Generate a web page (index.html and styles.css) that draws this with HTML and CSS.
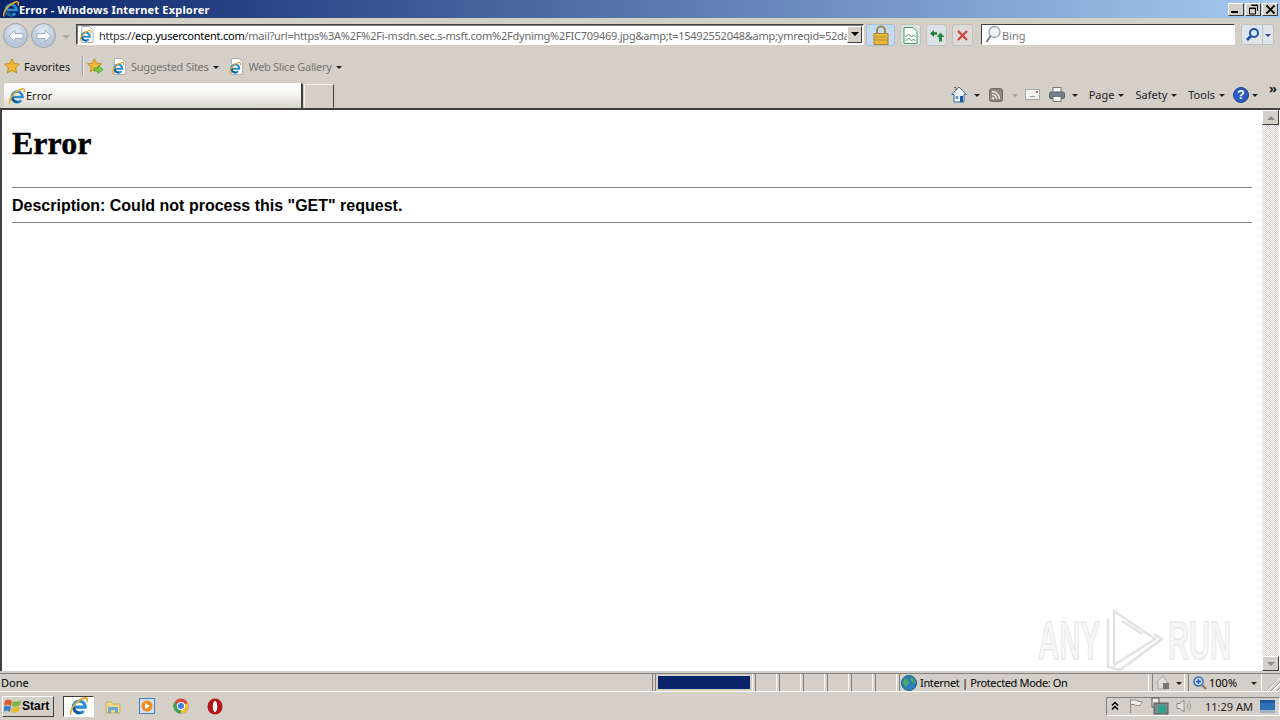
FILE: index.html
```html
<!doctype html>
<html>
  <head>
    <meta charset="UTF-8" />
    <title>Error - Windows Internet Explorer</title>
    <link rel="stylesheet" href="styles.css">
  </head>
  <body>
    <svg class="defs" width="0" height="0">
      <symbol id="ie" viewBox="0 0 16 16">
        <path d="M4 9h9.500a5.300 5.300 0 1 0-1.300 3.400" fill="none" stroke="#2b8ed0" stroke-width="2.700" />
        <path d="M3.300 9a5.300 5.300 0 0 0 6.200 4.900" fill="none" stroke="#14578f" stroke-width="2.200" />
        <path d="M.8 15.500C-.5 11 6 3 12.500 1c2.700-.8 3.500 1 2.500 3.500" fill="none" stroke="#e6a82c" stroke-width="1.500" />
      </symbol>
      <symbol id="page" viewBox="0 0 16 18">
        <path d="M2.500 .5h8l4 4v13h-12z" fill="#fff" stroke="#a9a9a9" />
        <use href="#ie" x="0" y="4" width="13" height="13" />
      </symbol>
      <symbol id="star" viewBox="0 0 16 16">
        <path d="M8 .8l2.200 4.800 5.200.6-3.900 3.500 1.100 5.200L8 12.300l-4.600 2.600 1.100-5.200L.6 6.200l5.200-.6z" fill="#f5b93a" stroke="#c98a1c" />
      </symbol>
    </svg>

    <header class="titlebar">
      <svg class="title-icon"><use href="#ie" /></svg>
      <span class="title-text">Error - Windows Internet Explorer</span>
      <div class="win-buttons">
        <div class="win-btn"><span class="glyph-min"></span></div>
        <div class="win-btn">
          <svg width="11" height="11" viewBox="0 0 11 11"><path d="M3.500 1h6v6M1.500 4h6v6h-6zM1.500 4.500h6M3.500 1.500h6" fill="none" stroke="#000" /></svg>
        </div>
        <div class="win-btn">
          <svg width="11" height="11" viewBox="0 0 11 11"><path d="M1.500 1.500l8 8M9.500 1.500l-8 8" stroke="#000" stroke-width="1.800" /></svg>
        </div>
      </div>
    </header>

    <div class="addr-row">
      <div class="nav-btn">
        <svg width="16" height="14" viewBox="0 0 16 14"><path d="M7 1L1 7l6 6V9.500h8v-5H7z" fill="#f4f7fa" stroke="#9fb0c4" /></svg>
      </div>
      <div class="nav-btn">
        <svg width="16" height="14" viewBox="0 0 16 14"><path d="M9 1l6 6-6 6V9.500H1v-5h8z" fill="#f4f7fa" stroke="#9fb0c4" /></svg>
      </div>
      <span class="nav-drop"></span>
      <div class="addr-box">
        <svg class="addr-icon"><use href="#page" /></svg>
        <div class="addr-text"><span class="addr-dark">https://</span><span class="addr-host">ecp.yusercontent.com</span>/mail?url=https%3A%2F%2Fi-msdn.sec.s-msft.com%2Fdynimg%2FIC709469.jpg&amp;amp;t=15492552048&amp;amp;ymreqid=52da</div>
        <div class="addr-drop"><span class="arrow-black"></span></div>
      </div>
      <div class="lock-btn">
        <svg width="16" height="20" viewBox="0 0 16 20"><path d="M4 9V5.500a4 4 0 0 1 8 0V9" fill="none" stroke="#9a8a4a" stroke-width="2" /><rect x="1" y="8.500" width="14" height="11" fill="#e6b83f" stroke="#a9872c" /><path d="M1 12h14M1 15h14" stroke="#b8922f" /></svg>
      </div>
      <div class="tool-btn tool-green">
        <svg width="15" height="17" viewBox="0 0 15 17"><path d="M1 .5h9l4 4v12H1z" fill="#fff" stroke="#3d9a5c" /><path d="M2.500 10l3-3 3 3 2-2 2 2M2.500 14l3-3 3 3 2-2 2 2" fill="none" stroke="#3d9a5c" /></svg>
      </div>
      <div class="tool-btn">
        <svg width="16" height="13" viewBox="0 0 16 13"><path d="M1 4.500L5 1v2.300h3v2.400H5V8z" fill="#2a7a3a" /><path d="M11.500 3.500L15.500 8H13v4.500h-3V8H7.500z" fill="#2a8a3a" /></svg>
      </div>
      <div class="tool-btn tool-red">
        <svg width="13" height="13" viewBox="0 0 13 13"><path d="M2 2l9 9M11 2l-9 9" stroke="#d2454a" stroke-width="2.400" /></svg>
      </div>
      <div class="search-box">
        <svg width="16" height="20" viewBox="0 0 16 20"><circle cx="9.500" cy="7" r="5.500" fill="#eef3f8" stroke="#8e9fb2" stroke-width="1.300" /><path d="M5.500 11L1.500 17" stroke="#7d7d7d" stroke-width="2" /></svg>
        <span class="search-text">Bing</span>
      </div>
      <div class="search-btn">
        <div class="search-go">
          <svg width="15" height="15" viewBox="0 0 15 15"><circle cx="9" cy="6" r="4" fill="#dbe8f6" stroke="#1e4fa8" stroke-width="2" /><path d="M6 9l-4 4" stroke="#1e4fa8" stroke-width="2.600" /></svg>
        </div>
        <div class="search-more"><span class="arrow-small"></span></div>
      </div>
    </div>

    <div class="fav-row">
      <svg class="fav-star"><use href="#star" /></svg>
      <span class="fav-label">Favorites</span>
      <span class="fav-sep"></span>
      <svg class="fav-add" viewBox="0 0 18 16">
        <use href="#star" width="15" height="15" />
        <path d="M7 10h4V7.500l5 4-5 4V13H7z" fill="#7ecb4a" stroke="#4b9a2a" stroke-width=".8" />
      </svg>
      <svg class="fav-page"><use href="#page" /></svg>
      <span class="fav-link">Suggested Sites</span>
      <span class="arrow-small arrow-fav"></span>
      <svg class="fav-page fav-page-2"><use href="#page" /></svg>
      <span class="fav-link">Web Slice Gallery</span>
      <span class="arrow-small arrow-fav"></span>
    </div>

    <div class="tab-row">
      <div class="tab">
        <svg class="tab-icon"><use href="#ie" /></svg>
        <span>Error</span>
      </div>
      <div class="tab-new"></div>
      <div class="tools">
        <svg class="tool-home" viewBox="0 0 16 17"><path d="M8 1L.8 8.500h2.200V16h10V8.500h2.200z" fill="#f1f4f8" stroke="#3a6a9a" /><path d="M3 1.500h2v3" fill="none" stroke="#a0522d" /><rect x="9" y="10" width="3" height="6" fill="#1c5aa0" /><rect x="4.500" y="10" width="3" height="3" fill="#6aa0d0" /></svg>
        <span class="arrow-small arrow-home"></span>
        <svg class="tool-rss" viewBox="0 0 14 14"><rect x=".5" y=".5" width="13" height="13" rx="2" fill="#8c8880" stroke="#6e6a64" /><circle cx="4" cy="10.300" r="1.300" fill="#e8e6e2" /><path d="M3 6.500a4.500 4.500 0 0 1 4.500 4.500M3 3.500a7.500 7.500 0 0 1 7.500 7.500" fill="none" stroke="#e8e6e2" stroke-width="1.400" /></svg>
        <span class="arrow-small arrow-faint"></span>
        <svg class="tool-mail" viewBox="0 0 15 11"><rect x=".5" y=".5" width="14" height="10" fill="#f2f2f0" stroke="#a6a6a2" /><path d="M5 7.500h5" stroke="#9c9c98" /><rect x="11" y="2" width="2" height="2" fill="#c2605a" /></svg>
        <svg class="tool-print" viewBox="0 0 16 15"><rect x="4" y=".5" width="8" height="5" fill="#f5f5f5" stroke="#777" /><rect x=".5" y="5" width="15" height="6.500" rx="1.500" fill="#74808c" stroke="#566069" /><rect x="4" y="9.500" width="8" height="5" fill="#fff" stroke="#777" /></svg>
        <span class="arrow-small arrow-print"></span>
        <span class="tool-label">Page</span>
        <span class="arrow-small"></span>
        <span class="tool-label">Safety</span>
        <span class="arrow-small"></span>
        <span class="tool-label">Tools</span>
        <span class="arrow-small"></span>
        <svg class="tool-help" viewBox="0 0 16 16"><circle cx="8" cy="8" r="7.500" fill="#2a5fc0" stroke="#1c3f8c" /><text x="8" y="12" text-anchor="middle" class="help-mark">?</text></svg>
        <span class="arrow-small arrow-help"></span>
        <span class="tool-more">&raquo;</span>
      </div>
    </div>

    <main class="main">
      <div class="page">
        <h1>Error</h1>
        <hr />
        <h3>Description: Could not process this "GET" request.</h3>
        <hr />
      </div>
      <div class="scrollbar">
        <div class="scroll-btn"><span class="arrow-up"></span></div>
        <div class="scroll-btn"><span class="arrow-down"></span></div>
      </div>
      <svg class="watermark" viewBox="0 0 204 62" width="204" height="62">
        <text transform="translate(2 50) scale(.544 1)" class="wm-text">ANY</text>
        <text transform="translate(132 50) scale(.54 1)" class="wm-text">RUN</text>
        <path d="M78 2v54l41-26zM72 10v48l12 3 42-31-8-5M86 12l20 13" class="wm-play" />
      </svg>
    </main>

    <div class="statusbar">
      <div class="st-done">Done</div>
      <div class="st-progress"><div class="st-fill"></div></div>
      <div class="st-cell"></div>
      <div class="st-cell"></div>
      <div class="st-cell"></div>
      <div class="st-cell"></div>
      <div class="st-cell"></div>
      <div class="st-cell"></div>
      <div class="st-zone">
        <svg class="zone-globe" viewBox="0 0 16 16"><circle cx="8" cy="8" r="7.500" fill="#2f7fb8" stroke="#1d5a86" /><path d="M3 4c3-1 4 1 5 3s-2 2-2 4-3-1-4-3zM10 2c3 1 4 4 4 6-2 0-3-1-4-2s0-3 0-4z" fill="#4aa86a" /></svg>
        <span class="zone-text">Internet | Protected Mode: On</span>
      </div>
      <div class="st-lock">
        <svg width="17" height="15" viewBox="0 0 17 15"><path d="M8 1L1 8h2v6h8V8h2z" fill="#dedcd6" stroke="#a8a8a4" /><rect x="8" y="8" width="6" height="6" fill="#77756f" /></svg>
        <span class="arrow-small"></span>
      </div>
      <div class="st-zoom">
        <svg width="14" height="14" viewBox="0 0 14 14"><circle cx="5.500" cy="5.500" r="4.500" fill="#cfe0f6" stroke="#2a6ac0" stroke-width="1.500" /><path d="M3 5.500h5M5.500 3v5" stroke="#1c52b0" stroke-width="1.400" /><path d="M9 9l4 4" stroke="#8a7a5a" stroke-width="2" /></svg>
        <span class="zoom-text">100%</span>
        <span class="arrow-small arrow-zoom"></span>
      </div>
      <div class="st-grip"></div>
    </div>

    <footer class="taskbar">
      <div class="start-btn">
        <svg width="18" height="16" viewBox="0 0 18 16"><path d="M1 3c3-2 5-1 7 0L7 8C5 7 3 6 0 8z" fill="#d8582a" /><path d="M9 3c2 1 5 1 8-1l-1 5c-3 2-6 2-8 1z" fill="#7bb23a" /><path d="M0 9c3-2 5-1 7 0l-1 5c-2-1-4-2-7 0z" fill="#3a7fc8" /><path d="M8 9c2 1 5 1 8-1l-1 5c-3 2-6 2-8 1z" fill="#e8b92e" /></svg>
        <span>Start</span>
      </div>
      <div class="task-ie"><svg width="18" height="18"><use href="#ie" /></svg></div>
      <div class="task-item">
        <svg width="16" height="15" viewBox="0 0 16 15"><path d="M1 3h5l2 2h7v9H1z" fill="#f2d98a" stroke="#c9ab5a" /><path d="M3 14V8h10v6h-3v-3H6v3z" fill="#69a8cf" /></svg>
      </div>
      <div class="task-item">
        <svg width="16" height="16" viewBox="0 0 16 16"><rect x=".5" y=".5" width="15" height="15" fill="#d4e0ee" stroke="#4a7cc0" /><circle cx="8" cy="8" r="5.500" fill="#ee8a1e" /><path d="M6 5l5 3-5 3z" fill="#fff" /></svg>
      </div>
      <div class="task-item">
        <svg width="16" height="16" viewBox="0 0 16 16"><circle cx="8" cy="8" r="7.500" fill="#d8453a" /><path d="M8 8L14.500 5A7.500 7.500 0 0 1 8 15.500z" fill="#f2c22e" /><path d="M8 8v7.500A7.500 7.500 0 0 1 1.500 4z" fill="#3fa552" /><circle cx="8" cy="8" r="3.600" fill="#3f7fd8" stroke="#fff" stroke-width="1.200" /></svg>
      </div>
      <div class="task-item">
        <svg width="16" height="17" viewBox="0 0 16 17"><ellipse cx="8" cy="8.500" rx="7.500" ry="8" fill="#b8141c" /><ellipse cx="8" cy="8.500" rx="2.200" ry="5.800" fill="#fff" /></svg>
      </div>
      <div class="tray">
        <svg class="tray-up" viewBox="0 0 8 10"><path d="M1 4.500L4 1.500l3 3M1 8.500l3-3 3 3" fill="none" stroke="#000" stroke-width="1.500" /></svg>
        <svg class="tray-flag" viewBox="0 0 16 16"><path d="M2.500 1v14M2.500 2h6l1 1.500h5l-2 3 0 1h-5l-1-1h-4" fill="#f2f0ec" stroke="#8a8a86" /></svg>
        <svg class="tray-net" viewBox="0 0 18 18"><rect x="1" y="1" width="7" height="9" fill="#f2f0ec" stroke="#555" /><rect x="3" y="6" width="14" height="11" fill="#7d8a8c" stroke="#555" /><circle cx="11" cy="12" r="4.500" fill="#2fa08c" /></svg>
        <svg class="tray-vol" viewBox="0 0 16 16"><path d="M1 5.500h3L8 2v12L4 10.500H1z" fill="#e6e4df" stroke="#8a8a86" /><path d="M10.500 5a4 4 0 0 1 0 6M12.500 3a7 7 0 0 1 0 10" fill="none" stroke="#9a9a96" /></svg>
        <span class="tray-time">11:29 AM</span>
        <svg class="tray-desk" viewBox="0 0 15 13"><rect width="15" height="13" fill="#2f72b8" /><rect y="10" width="15" height="3" fill="#9fb4c8" /><path d="M0 0h15v3H0z" fill="#1f5a9c" /></svg>
      </div>
    </footer>
  </body>
</html>
```

FILE: styles.css
```css
html,
body {
  margin: 0;
  padding: 0;
  background-color: #d4d0c8;
}
body {
  width: 1280px;
  height: 720px;
  overflow: hidden;
  display: flex;
  flex-direction: column;
  font-family: "Noto Sans", "Liberation Sans", sans-serif;
  font-size: 11px;
  color: #000;
}
.defs {
  position: absolute;
}
svg {
  display: block;
  flex: none;
}

/* title bar */
.titlebar {
  height: 18px;
  flex: none;
  display: flex;
  align-items: center;
  background: linear-gradient(to right, #0a246a, #a6caf0);
  color: #fff;
}
.title-icon {
  width: 16px;
  height: 16px;
  margin-left: 3px;
}
.title-text {
  font-weight: bold;
  font-size: 11px;
  letter-spacing: 0.2px;
}
.win-buttons {
  margin-left: auto;
  margin-right: 2px;
  display: flex;
  gap: 1px;
}
.win-btn {
  width: 14px;
  height: 11px;
  background-color: #d4d0c8;
  border: 1px solid;
  border-color: #fff #404040 #404040 #fff;
  display: flex;
  align-items: center;
  justify-content: center;
}
.glyph-min {
  width: 7px;
  height: 2px;
  background-color: #000;
  margin-top: 6px;
  margin-right: 3px;
}

/* address row */
.addr-row {
  height: 36px;
  flex: none;
  display: flex;
  align-items: flex-start;
  padding-top: 5px;
  box-sizing: border-box;
}
.nav-btn {
  width: 25px;
  height: 25px;
  margin-left: 3px;
  border-radius: 50%;
  border: 1px solid #9ea3a9;
  box-sizing: border-box;
  background: radial-gradient(circle at 50% 30%, #e4ebf2, #b4c4d6 70%, #dadfe4);
  display: flex;
  align-items: center;
  justify-content: center;
}
.nav-drop {
  width: 0;
  height: 0;
  margin: 12px 0 0 6px;
  border: 4px solid transparent;
  border-top-color: #b0aca4;
}
.addr-box {
  width: 788px;
  height: 21px;
  margin-left: 6px;
  margin-top: 1px;
  box-sizing: border-box;
  background-color: #fff;
  border: 1px solid;
  border-color: #404040 #fff #fff #404040;
  box-shadow: inset 1px 1px 0 #808080;
  display: flex;
  align-items: center;
}
.addr-icon {
  width: 16px;
  height: 17px;
  margin-left: 2px;
}
.addr-text {
  flex: 1;
  min-width: 0;
  margin-left: 4px;
  padding-top: 2px;
  overflow: hidden;
  white-space: nowrap;
  color: #6a6a6a;
  font-size: 11px;
  letter-spacing: -0.24px;
}
.addr-dark {
  color: #333;
}
.addr-host {
  color: #000;
}
.addr-drop {
  width: 15px;
  height: 17px;
  margin-right: 1px;
  background-color: #d4d0c8;
  border: 1px solid;
  border-color: #fff #404040 #404040 #fff;
  box-sizing: border-box;
  display: flex;
  align-items: center;
  justify-content: center;
}
.arrow-black {
  width: 0;
  height: 0;
  margin-top: 3px;
  border: 4px solid transparent;
  border-top-color: #000;
}
.lock-btn {
  width: 29px;
  height: 22px;
  margin-left: 2px;
  margin-top: 1px;
  box-sizing: border-box;
  background-color: #c4d9f2;
  border: 1px solid #a9bdd4;
  border-radius: 2px;
  display: flex;
  align-items: center;
  justify-content: center;
}
.tool-btn {
  width: 21px;
  height: 22px;
  margin-left: 5px;
  margin-top: 1px;
  box-sizing: border-box;
  background-color: #dbe2e6;
  border: 1px solid #c2c2bc;
  border-radius: 3px;
  display: flex;
  align-items: center;
  justify-content: center;
}
.tool-green {
  background-color: #dfe6df;
}
.tool-red {
  background-color: #dedad6;
}
.search-box {
  width: 254px;
  height: 21px;
  margin-left: 8px;
  margin-top: 1px;
  box-sizing: border-box;
  background-color: #fff;
  border: 1px solid;
  border-color: #404040 #fff #fff #404040;
  display: flex;
  align-items: center;
  padding-left: 3px;
}
.search-text {
  margin-left: 1px;
  padding-top: 2px;
  color: #777;
}
.search-btn {
  width: 33px;
  height: 21px;
  margin-left: 6px;
  margin-top: 1px;
  box-sizing: border-box;
  border: 1px solid #c2c2bc;
  border-radius: 3px;
  background-color: #dde4ec;
  display: flex;
}
.search-go {
  width: 20px;
  display: flex;
  align-items: center;
  justify-content: center;
  border-right: 1px solid #c2c2bc;
}
.search-more {
  flex: 1;
  display: flex;
  align-items: center;
  justify-content: center;
}
.search-more .arrow-small {
  border-top-color: #2a4f8c;
  margin-left: 0;
}

/* small dropdown arrow shared by the toolbars */
.arrow-small {
  width: 0;
  height: 0;
  margin-top: 2px;
  margin-left: 4px;
  flex: none;
  border: 3px solid transparent;
  border-top-color: #222;
  border-bottom-width: 0;
}

/* favorites row */
.fav-row {
  height: 27px;
  flex: none;
  display: flex;
  align-items: center;
  padding: 0 0 3px 4px;
  box-sizing: border-box;
}
.fav-star {
  width: 16px;
  height: 16px;
}
.fav-label {
  margin-left: 4px;
  width: 54px;
  letter-spacing: -0.1px;
  color: #1a1a1a;
}
.fav-sep {
  width: 1px;
  height: 20px;
  background-color: #9a9892;
  margin-left: 4px;
  box-shadow: 1px 0 0 #f2f0ec;
}
.fav-add {
  width: 18px;
  height: 16px;
  margin-left: 4px;
}
.fav-page {
  width: 15px;
  height: 17px;
  margin-left: 7px;
}
.fav-page-2 {
  margin-left: 10px;
}
.fav-link {
  margin-left: 4px;
  letter-spacing: -0.3px;
  color: #77746e;
}
.arrow-fav {
  margin-left: 5px;
}

/* tab row */
.tab-row {
  height: 27px;
  flex: none;
  display: flex;
  align-items: flex-end;
  padding-left: 4px;
  box-sizing: border-box;
}
.tab {
  width: 299px;
  height: 25px;
  box-sizing: border-box;
  border-right: 2px solid #404040;
  background: linear-gradient(to bottom, #fff, #f6f5f2 45%, #d8d5ce);
  border-radius: 2px 2px 0 0;
  display: flex;
  align-items: center;
  padding-left: 5px;
  color: #222;
}
.tab-icon {
  width: 16px;
  height: 16px;
  margin-right: 1px;
}
.tab-new {
  width: 30px;
  height: 24px;
  margin-left: 1px;
  box-sizing: border-box;
  border: 1px solid;
  border-color: #f2f0ec #404040 transparent #f2f0ec;
}
.tools {
  margin-left: auto;
  height: 27px;
  display: flex;
  align-items: center;
  color: #222;
}
.tool-home {
  width: 16px;
  height: 17px;
}
.arrow-home {
  margin-left: 7px;
}
.tool-rss {
  width: 14px;
  height: 14px;
  margin-left: 9px;
}
.arrow-faint {
  margin-left: 9px;
  border-top-color: #a8a49c;
}
.tool-mail {
  width: 15px;
  height: 11px;
  margin-left: 7px;
}
.tool-print {
  width: 16px;
  height: 15px;
  margin-left: 9px;
}
.arrow-print {
  margin-left: 7px;
}
.tool-label {
  margin-left: 11px;
}
.tool-help {
  width: 16px;
  height: 16px;
  margin-left: 8px;
}
.help-mark {
  font: bold 12px "Liberation Sans", sans-serif;
  fill: #fff;
}
.arrow-help {
  margin-left: 3px;
}
.tool-more {
  font-size: 13px;
  font-weight: bold;
  line-height: 13px;
  margin: -13px 3px 0 11px;
}

/* page content */
.main {
  flex: 1;
  min-height: 0;
  display: flex;
  position: relative;
  background-color: #fff;
  border-top: 2px solid #404040;
  border-left: 2px solid #404040;
  box-sizing: border-box;
}
.page {
  flex: 1;
  padding: 0 10px;
}
.page h1 {
  margin: 15px 0 25px;
  font: bold 32px/37px "Liberation Serif", serif;
  -webkit-text-stroke: 0.4px #000;
}
.page hr {
  margin: 0;
  height: 0;
  border: 0;
  border-top: 1px solid #808080;
}
.page h3 {
  margin: 9px 0 7px;
  font: bold 16px/18px "Liberation Sans", sans-serif;
}
.scrollbar {
  width: 17px;
  margin-right: 1px;
  display: flex;
  flex-direction: column;
  justify-content: space-between;
  background-color: #eeece8;
  background-image: repeating-conic-gradient(#d4d0c8 0 25%, #fff 0 50%);
  background-size: 2px 2px;
}
.scroll-btn {
  height: 15px;
  box-sizing: border-box;
  background-color: #d4d0c8;
  border: 1px solid;
  border-color: #fff #404040 #404040 #fff;
  display: flex;
  align-items: center;
  justify-content: center;
}
.arrow-up {
  width: 0;
  height: 0;
  border: 4px solid transparent;
  border-bottom-color: #8a8a86;
  border-top-width: 0;
}
.arrow-down {
  width: 0;
  height: 0;
  border: 4px solid transparent;
  border-top-color: #8a8a86;
  border-bottom-width: 0;
}
.watermark {
  position: absolute;
  right: 40px;
  bottom: 0;
}
.wm-text {
  font: bold 54px "Liberation Sans", sans-serif;
  fill: #f6f6f6;
  stroke: #e2e2e2;
  stroke-width: 1;
}
.wm-play {
  fill: none;
  stroke: #e2e2e2;
  stroke-width: 2.500;
}

/* status bar */
.statusbar {
  height: 21px;
  flex: none;
  display: flex;
  box-sizing: border-box;
  padding-top: 3px;
  border-bottom: 1px solid #fff;
  background-color: #d4d0c8;
  box-shadow: inset 0 2px 0 #d4d0c8, inset 0 3px 0 #808080;
  line-height: 17px;
}
.st-done {
  width: 653px;
  box-sizing: border-box;
  padding-left: 1px;
  border-right: 1px solid #808080;
}
.st-progress {
  width: 98px;
  margin-left: 2px;
  box-sizing: border-box;
  border-left: 1px solid #808080;
  border-right: 1px solid #fff;
  padding: 2px 2px 1px;
}
.st-fill {
  height: 13px;
  background-color: #0a246a;
}
.st-cell {
  width: 22px;
  margin-left: 2px;
  box-sizing: border-box;
  border-left: 1px solid #808080;
  border-right: 1px solid #fff;
}
.st-zone {
  width: 250px;
  margin-left: 2px;
  box-sizing: border-box;
  border-left: 1px solid #808080;
  border-right: 1px solid #fff;
  display: flex;
  align-items: center;
  padding-left: 1px;
}
.zone-globe {
  width: 16px;
  height: 16px;
  margin-right: 3px;
}
.zone-text {
  letter-spacing: -0.35px;
}
.st-lock {
  width: 33px;
  margin-left: 3px;
  box-sizing: border-box;
  border-left: 1px solid #808080;
  border-right: 1px solid #fff;
  display: flex;
  align-items: center;
  padding-left: 2px;
}
.st-zoom {
  width: 74px;
  margin-left: 3px;
  box-sizing: border-box;
  border-left: 1px solid #808080;
  border-right: 1px solid #fff;
  display: flex;
  align-items: center;
  padding-left: 4px;
}
.zoom-text {
  margin-left: 2px;
}
.arrow-zoom {
  margin-left: 14px;
}
.st-grip {
  flex: 1;
  background: repeating-linear-gradient(135deg, transparent 0 2px, #9a9892 2px 3px, #fff 3px 4px);
  clip-path: polygon(100% 20%, 100% 100%, 20% 100%);
}

/* taskbar */
.taskbar {
  height: 28px;
  flex: none;
  display: flex;
  align-items: center;
  padding-left: 2px;
}
.start-btn {
  width: 52px;
  height: 21px;
  box-sizing: border-box;
  border: 1px solid;
  border-color: #fff #404040 #404040 #fff;
  display: flex;
  align-items: center;
  padding-left: 1px;
  font: bold 12px "Liberation Sans", sans-serif;
}
.task-ie {
  width: 31px;
  height: 21px;
  margin-left: 9px;
  box-sizing: border-box;
  background-color: #fff;
  border: 1px solid;
  border-color: #404040 #fff #fff #404040;
  display: flex;
  align-items: center;
  justify-content: center;
}
.task-item {
  width: 34px;
  height: 21px;
  display: flex;
  align-items: center;
  justify-content: center;
}
.task-ie + .task-item {
  margin-left: 2px;
}
.tray {
  margin-left: auto;
  width: 174px;
  height: 19px;
  box-sizing: border-box;
  border: 1px solid;
  border-color: #808080 #fff #fff #808080;
  display: flex;
  align-items: center;
}
.tray-up {
  width: 8px;
  height: 10px;
  margin-left: 4px;
}
.tray-flag {
  width: 16px;
  height: 16px;
  margin-left: 9px;
}
.tray-net {
  width: 18px;
  height: 18px;
  margin-left: 7px;
}
.tray-vol {
  width: 16px;
  height: 16px;
  margin-left: 7px;
}
.tray-time {
  margin-left: 13px;
  color: #222;
}
.tray-desk {
  width: 15px;
  height: 13px;
  margin-left: 7px;
}
```
